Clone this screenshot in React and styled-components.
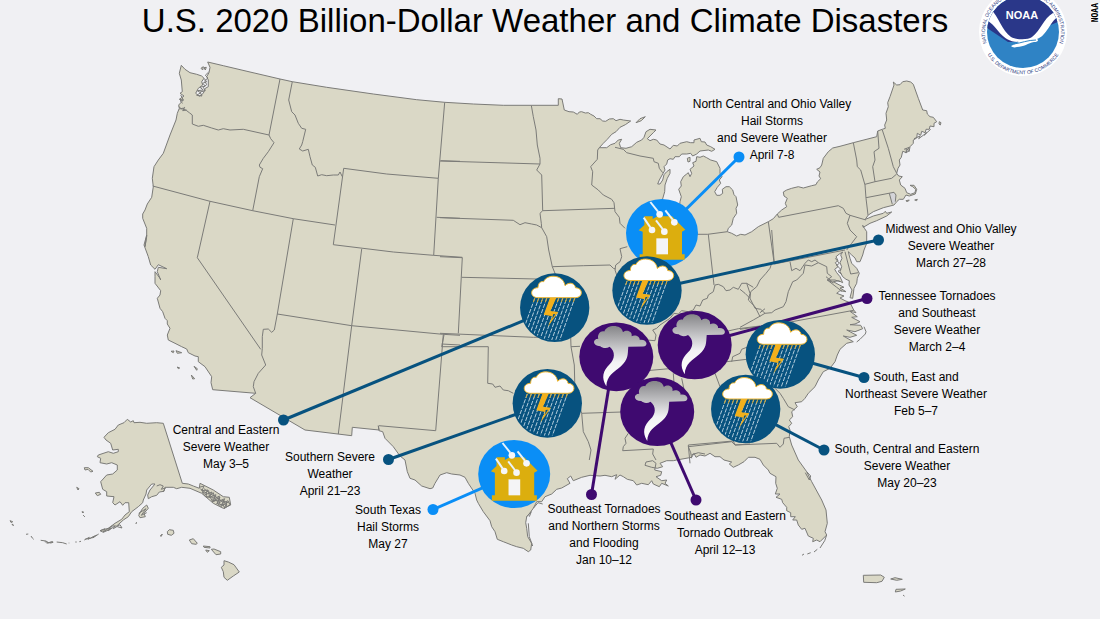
import React from "react";
import styled, { createGlobalStyle } from "styled-components";

const GlobalStyle = createGlobalStyle`
  * { box-sizing: border-box; }
  body { margin: 0; background: #f0f0f3; overflow-x: hidden; }
`;

const C = {
  land: "#dad8c6",
  water: "#f0f0f3",
  border: "#7b7b78",
  hail: "#0a8ef6",
  storm: "#07527f",
  tornado: "#3f0a70",
  gold: "#dcae0e",
};

const Page = styled.main`
  position: relative;
  width: 100%;
  overflow: hidden;
  background: ${C.water};
  color: #000;
  font-family: "Liberation Sans", Arial, sans-serif;
`;

const Header = styled.header`
  display: flex;
  justify-content: center;
  height: 42px;
  padding-right: 10px;
`;

const Title = styled.h1`
  margin: 0;
  font-size: 33px;
  line-height: 42px;
  font-weight: 400;
  white-space: nowrap;
`;

const Seal = styled.svg`
  position: absolute;
  z-index: 1;
  top: -12px;
  right: 32px;
  width: 90px;
  height: 90px;
`;

const Credit = styled.small`
  position: absolute;
  top: 3px;
  right: 0;
  writing-mode: vertical-rl;
  transform: rotate(180deg);
  font: 700 8px/9px "DejaVu Sans Mono", monospace;
  color: #000;
  background: #fff;
`;

const Map = styled.figure`
  position: relative;
  margin: 0;
`;

const MapDrawing = styled.svg`
  display: block;
  width: 100%;
  height: auto;
`;

const Labels = styled.ul`
  list-style: none;
  margin: 0;
  padding: 0;
`;

const Label = styled.li`
  position: absolute;
  left: ${(p) => (p.$x / 1100) * 100}%;
  top: ${(p) => ((p.$y - 42) / 577) * 100}%;
  transform: translateX(-50%);
  font-size: 12px;
  line-height: 17px;
  text-align: center;
  white-space: pre;
`;

/* The chart is surveyed in sheets: a sheet has an origin, and three units to a map unit. */
const SHEETS = {
  A: [140, 50], B: [440, 80], C: [740, 70], D: [140, 230], E: [440, 250],
  F: [740, 230], G: [0, 400], H: [360, 400], I: [620, 420],
};
const plot = (sheet, pts) => {
  const [ox, oy] = SHEETS[sheet];
  return pts.trim().split(/\s+/).map((p) => {
    const [x, y] = p.split(",").map(Number);
    return `${(ox + x / 3).toFixed(1)},${(oy + y / 3).toFixed(1)}`;
  }).join(" ");
};

const COAST = [
  ["A", "124,46 135,58 150,68 170,73 185,78 192,85 185,95 188,105 175,115 167,130 178,139 190,130 196,115 205,110 205,90 200,80 207,68 210,52 203,36 250,47 330,66 420,87 457,95 560,112 700,132 830,149 914,157"],
  ["B", "100,72 190,76 274,76 355,76 355,56 366,57 373,90 387,95 400,96 412,103 418,96 425,95 436,99 445,98 452,103 462,108 470,116 480,116 488,123 497,124 508,117 520,116 528,122 540,118 550,120 572,123 556,134 540,142 528,155 515,163 502,178 490,190 478,203 500,203 512,194 525,190 535,180 545,178 538,190 542,203 558,205 575,200 590,187 605,180 612,172 618,155 630,148 648,150 640,158 622,176 630,182 640,178 650,180 660,192 672,195 690,207 700,196 712,198 720,190 740,185 752,188 762,188 762,180 780,175 784,185 795,186 800,195 812,200 825,208 815,214 805,210 780,213 770,222 758,228 752,220 740,222 725,222 718,230 705,230 700,238 690,236 683,240 680,252 672,260 675,270 668,282 658,300 653,312 660,312 668,300 672,284 680,275 690,268 690,280 682,295 675,315 674,335 667,360 668,420 690,440 715,420 720,365 724,350 716,328 724,318 722,305 730,290 740,282 745,278 750,290 755,280 750,268 762,258 758,248 768,244 770,230 780,232 790,228 800,233 812,240 830,245 840,265 840,280 846,290 838,300 842,310 832,322 824,335 830,346 840,346 848,340 847,328 858,320 868,320 878,330 882,344 888,350 893,375 888,385 890,400 880,415 875,435 865,445 862,455 875,460 890,468 902,463 915,465 935,455 955,440"],
  ["C", "85,455 100,446 112,432 125,420 140,410 136,400 142,385 132,378 130,366 140,360 155,355 175,350 190,354 215,347 228,344 232,336 242,326 237,318 240,306 230,298 240,293 245,285 250,265 265,245 278,234 300,229 340,218 410,200 413,183 427,178 436,175 434,165 440,150 438,130 445,110 443,98 450,80 462,45 460,36 470,45 480,44 488,35 500,33 512,36 520,43 535,85 548,120 560,122 562,132 570,140 580,142 590,155 582,160 582,170 570,168 568,178 558,178 556,188 545,184 542,196 532,190 530,204 520,210 520,220 510,230 508,242 498,236 500,248 488,244 484,262 478,270 480,285 474,295 470,310 476,318 487,320 478,330 482,345 495,355 500,368 512,373 525,368 527,358 518,350 510,346 522,346 530,358 526,372 508,378 498,375 490,388 478,388 470,395 462,405 430,413 400,425 385,435 376,448 384,445 400,438 430,430 436,424 440,430 455,426 440,438 410,452 390,460 370,472 368,466 374,476 380,485 380,520 372,540 368,555"],
  ["F", "360,95 350,95 345,84 335,75 325,65 330,85 335,100 350,115 358,130 352,145 350,160 342,175 338,205 330,203 336,180 327,165 328,152 318,148 308,140 300,125 305,110 300,98 306,85 302,75 308,66 298,72 288,80 294,92 286,98 294,110 284,118 290,128 300,140 308,158 296,152 280,155 300,166 312,172 300,174 318,185 300,182 290,190 312,198 300,204 315,212 330,218 341,240 348,248 330,244 352,260 335,262 360,275 345,282 330,284 362,286 368,296 345,305 320,300 350,316 330,322 310,318 340,335 320,340 300,358 292,375 285,395 270,415 250,425 235,450 225,470 205,490 195,505 185,515 165,518 172,530 155,545 158,560 148,570 155,580 146,590 150,600"],
  ["I", "508,50 515,75 535,120 560,155 575,185 605,240 618,270 622,310 615,335 620,345 600,365 590,360 578,365 580,355 565,348 555,325 545,328 535,315 530,300 518,300 526,290 512,290 512,278 500,272 500,262 488,248 485,238 468,232 480,222 466,222 472,205 467,190 468,170 450,160 445,150 430,135 420,118 405,112 385,112 372,125 355,135 340,142 328,132 335,126 312,120 300,110 285,110 270,100 255,108 240,105 228,112 222,100 215,112 170,120 160,122 140,122 120,130 128,140 112,145 95,142 75,136 78,126 98,122 108,130 104,150 125,155 122,166 108,170 125,182 140,180 135,190 145,198 125,190 118,200 100,192 95,182 85,194 65,190 50,195 40,182 22,178 10,170 0,165"],
  ["H", "765,238 770,224 755,230 735,226 720,228 690,226 665,232 640,242 632,228 622,236 630,250 605,264 590,268 575,282 555,290 545,305 530,305 520,325 505,345 500,350 497,368 500,385 503,410 515,430 512,450 505,455 490,445 470,440 455,435 430,425 412,418 405,395 395,380 390,362 370,335 355,310 350,300 345,280 325,250 315,232 300,225 275,222 260,218 240,225 225,250 218,264 210,266 185,258 165,240 150,235 142,215 135,180 120,168 100,140 75,115 68,95 57,92 55,77"],
  ["D", "717,600 637,592 635,617 495,600 330,503 347,490 218,479 213,458 215,440 195,410 175,395 175,380 165,378 145,368 140,357 125,350 105,340 85,330 82,315 90,295 82,282 82,272 75,265 68,245 60,235 52,205 60,195 62,182 45,160 45,140 45,125 60,145 62,150 52,125 55,112 80,116 55,104 45,118 32,105 25,80 12,45 20,15"],
  ["A", "15,590 20,560 20,535 8,505 8,492 15,480 22,462 35,442 40,410 37,385 42,350 55,330 70,310 90,255 108,210 112,190 118,175 116,165 130,150 118,148 132,138 120,130 127,125 124,90 118,70"],
];

const ALASKA = ["G", "382,58 392,66 400,62 402,68 420,67 440,70 470,68 490,70 547,250 565,252 580,258 598,265 600,250 640,270 670,290 688,292 692,315 670,325 640,310 605,280 570,265 545,262 530,266 520,262 495,262 492,274 478,276 470,286 455,290 445,296 443,285 450,270 465,252 455,252 440,270 438,282 430,300 428,308 415,320 395,335 385,350 370,360 350,378 335,378 330,388 310,397 300,392 325,385 345,370 365,358 375,345 388,335 386,308 375,308 368,316 360,305 345,315 338,308 342,290 320,288 320,275 308,268 302,245 320,225 338,222 352,210 352,195 335,188 320,192 300,188 302,175 292,170 295,165 325,155 340,160 355,155 355,148 338,150 332,130 318,120 312,112 325,98 345,88 355,75 372,68"];

const ISLANDS = [
  ["G", "502,395 508,389 520,391 522,400 514,406 503,403"], ["G", "481,408 487,402 484,409"],
  ["G", "568,420 580,416 592,430 588,433 575,431"], ["G", "610,438 630,440 630,444 612,442"],
  ["G", "634,448 642,447 662,455 662,462 648,464"], ["G", "617,450 628,452 622,457"],
  ["G", "672,482 685,486 702,494 718,516 700,528 682,541 672,532 670,515 664,502 672,495"],
  ["I", "730,466 782,465 793,472 786,484 770,488 731,487"], ["I", "812,477 825,473 847,478 830,481"],
  ["I", "828,508 856,507 842,513 826,516"],
  ["G", "286,279 298,277 302,283 292,287"], ["G", "253,203 265,203 279,214 272,216 264,208 255,210"],
  ["G", "420,338 428,325 440,315 445,325 432,340 436,350 420,353 416,346"],
  ["B", "588,128 600,116 616,110 604,122"], ["B", "742,235 750,232 750,244 744,246"],
  ["C", "598,155 603,158 601,165 597,162"], ["C", "498,392 508,390 502,396"], ["C", "524,390 532,388 530,392"],
  ["D", "93,364 102,363 100,368"], ["D", "108,362 125,368 112,370"], ["D", "112,411 119,414 115,416"],
  ["D", "162,409 172,416 170,421"], ["D", "154,435 164,446 158,447"], ["A", "183,55 190,50 188,60"], ["A", "192,53 199,52 196,60"],
  ["G", "30,362 38,365 34,368"], ["G", "36,372 41,376 38,376"], ["G", "230,262 237,266 234,270"], ["G", "246,335 251,336 248,339"], ["G", "250,346 254,350"], ["G", "407,370 411,368"],
  ["I", "850,526 853,528"],
];

const BORDERS = [
  ["A", "420,87 387,255"],
  ["A", "118,177 128,175 140,182 148,188 157,195 157,222 175,229 190,226 215,234 235,240 250,236 270,240 310,238 387,255"],
  ["A", "387,255 392,266 402,278 385,305 370,325 358,345 360,352 368,356 358,380 338,482"],
  ["A", "38,408 210,454 338,482 460,506 585,525"],
  ["A", "210,454 172,623"],
  ["A", "457,95 446,150 455,185 465,195 475,220 485,235 497,238 488,275 485,285 478,297 488,303 505,298 510,320 517,345 526,352 533,378 545,374 560,377 580,375 595,375 600,366 607,380"],
  ["A", "611,355 580,584"], ["A", "611,355 740,372 895,385"], ["A", "914,157 895,385 881,616"],
  ["A", "902,332 960,334"], ["A", "890,502 960,505"], ["A", "460,506 412,792"],
  ["D", "172,83 362,358"], ["D", "580,44 760,66 880,76 967,82"], ["D", "665,57 635,287 595,612"],
  ["D", "412,252 403,300 395,307 385,297 370,298 367,320 367,355 365,375 377,405 355,430 342,455 340,470 347,490"],
  ["D", "412,252 635,287 908,313 960,316"], ["D", "910,313 887,602 717,587"], ["D", "905,342 960,345"],
  ["B", "0,243 300,252"], ["B", "0,413 220,421 240,434 255,428 275,432 290,435 305,443"],
  ["B", "274,76 280,110 288,150 292,195 300,235 300,252 290,270 305,285 308,392 300,400 304,430 305,443 320,470 326,510 337,560 345,580 355,590"],
  ["B", "308,392 525,385"],
  ["B", "478,203 473,210 472,238 452,260 458,275 455,315 475,330 490,345 515,358 522,368 525,395 538,412 540,430 555,445"],
  ["B", "562,500 540,506 545,530 540,545 527,555 525,570 530,585 528,620"],
  ["B", "337,560 430,557 510,555 520,565 527,567"],
  ["B", "0,530 67,533 55,760"], ["B", "65,592 290,597"], ["B", "525,202 550,208 560,218 600,228 640,235 642,245 655,250 658,265 668,278"],
  ["B", "770,463 803,463 862,455"], ["B", "805,463 822,615"],
  ["C", "85,455 103,582"], ["C", "112,432 116,442 295,407 310,415 318,430 330,436 378,450"],
  ["C", "340,218 350,270 352,290 362,300 375,345 378,385 384,435"],
  ["C", "413,183 417,235 402,245 405,270 398,290 405,335"], ["C", "427,180 445,235 460,290 470,310"],
  ["C", "375,343 405,335 455,325 470,312"], ["C", "378,383 462,367 468,375 466,395"], ["C", "448,370 457,403"],
  ["C", "330,436 322,460 330,480 350,500 335,520 320,540"],
  ["F", "95,0 103,102 315,60"], ["F", "315,65 332,132 355,128"],
  ["F", "150,95 155,122 168,115 180,122 195,100 205,90 215,95 225,90 235,98 260,110 262,130 275,140 262,150 285,150 300,155"],
  ["F", "235,98 215,108 195,105 190,130 170,150 158,155 145,185 138,215 130,230 105,240 95,248 75,250 62,238 45,235 30,205 32,185 50,170 60,150 78,130 90,115 95,100"],
  ["F", "30,205 15,190 0,178"], ["F", "75,250 40,270 0,292"], ["F", "0,298 130,280 341,241"],
  ["F", "105,475 120,490 130,505 145,530 165,540"],
  ["F", "60,248 75,236"],
  ["E", "0,250 280,262 392,262 393,290 403,345 405,430 425,490 430,545 445,575 453,600 448,630"],
  ["E", "12,255 5,290 145,290 143,400 158,402 165,412 180,408 190,420 205,422 220,430"],
  ["E", "393,290 420,289"], ["E", "425,490 545,486"], ["E", "565,550 555,565 558,580 550,590 548,602 640,597 638,612 648,630"],
  ["E", "620,270 645,272 648,255 638,240 650,235 660,225 690,205 702,190 715,192 725,182 745,185 760,180 768,165 780,168 788,150 802,145 805,135 820,125 825,105 835,103 850,110 858,122 870,120 880,112 895,118 905,100 920,100 940,112"],
  ["E", "620,362 700,355 740,348 860,335 920,328"], ["E", "700,370 702,400"], ["E", "825,370 840,410"],
  ["E", "750,640 745,585 880,573 885,585 930,582"], ["E", "875,335 878,320 900,310 905,298 925,290"],
  ["E", "920,100 930,130 925,150 945,170 960,200"], ["E", "855,245 895,236 960,228"], ["E", "725,385 745,480"],
  ["I", "345,75 470,70 480,82 490,72 492,55 508,52"],
  ["I", "215,115 212,98 205,80 335,65 345,75"],
];

/* Sounds, inlets and island chains too fine to fill. */
const INLETS = [
  ["A", "192,85 200,95 188,100 196,108 180,112 190,120 172,122 182,128 170,136 186,138 180,126 196,122 190,112 200,104 194,92 204,84 196,76 206,66"],
  ["A", "116,170 126,178 134,172 128,182 140,180"], ["A", "122,135 130,150 120,152 128,160"],
  ["G", "598,262 612,258 606,272 624,270 616,284 636,276 628,292 648,284 640,302 660,292 650,312 672,300 662,320 682,306 672,326 690,314 684,302 668,310 674,296 656,304 658,288 644,296 640,278 628,288 626,272 612,280 602,266"],
  ["G", "606,276 618,292 630,290 638,306 650,300 656,316 668,312 674,324"],
  ["G", "602,268 620,280 618,290 640,292 638,302 656,300 660,314 680,312 678,322"],
  ["G", "612,266 632,282 650,292 664,302 686,308"],
  ["G", "300,392 315,386 310,396 330,382 325,392 345,378 340,386 360,374 366,384 352,380"],
  ["G", "253,420 268,412 264,418 284,408 278,414 296,402"], ["G", "122,421 138,423 145,428 158,425 140,430"],
  ["G", "134,425 152,429 160,427"], ["G", "256,417 272,415 290,405"],
  ["G", "170,426 188,428 200,432"], ["G", "78,403 85,402"], ["G", "93,408 97,414 101,418"], ["G", "226,426 230,426"], ["G", "238,425 243,424"], ["G", "206,429 208,429"],
  ["G", "470,258 480,254 490,258 484,268 496,264 490,275"], ["G", "416,340 438,326 424,346 440,338"],
  ["H", "500,350 514,335 508,350"], ["H", "520,325 534,308 548,312"], ["H", "505,370 508,410 518,438"],
  ["I", "546,406 552,402"], ["I", "562,402 572,398"], ["I", "582,396 592,388"], ["I", "600,384 614,362 620,345"], ["I", "560,155 572,168 568,180 556,158"],
  ["C", "492,238 508,232 496,248 510,242"], ["C", "522,206 540,198 536,206 560,188 552,196 572,178"],
  ["F", "286,85 298,100 290,106 302,118 294,124 306,134"], ["F", "258,140 280,158 262,150 290,172 306,184"],
  ["F", "372,290 378,305 376,312 360,328 350,336"],
  ["I", "215,104 235,98 255,102"],
];

const EVENTS = [
  { kind: "hail", at: [662, 233], dot: [739, 157], x: 772, y: 96, text: "North Central and Ohio Valley\nHail Storms\nand Severe Weather\nApril 7-8" },
  { kind: "storm", at: [647, 290.5], dot: [878.5, 240], x: 951, y: 221, text: "Midwest and Ohio Valley\nSevere Weather\nMarch 27–28" },
  { kind: "tornado", at: [694.7, 345], dot: [867, 298.5], x: 937, y: 288, text: "Tennessee Tornadoes\nand Southeast\nSevere Weather\nMarch 2–4" },
  { kind: "storm", at: [780.3, 354.3], dot: [864, 377.5], x: 916, y: 369, text: "South, East and\nNortheast Severe Weather\nFeb 5–7" },
  { kind: "storm", at: [745.7, 409], dot: [824, 450], x: 907, y: 441, text: "South, Central and Eastern\nSevere Weather\nMay 20–23" },
  { kind: "storm", at: [554.7, 307.7], dot: [283.5, 420], x: 226, y: 422, text: "Central and Eastern\nSevere Weather\nMay 3–5" },
  { kind: "storm", at: [547.3, 403.3], dot: [388.5, 459.5], x: 330, y: 449, text: "Southern Severe\nWeather\nApril 21–23" },
  { kind: "hail", at: [514.2, 474], dot: [433, 509.5], x: 388, y: 502, text: "South Texas\nHail Storms\nMay 27" },
  { kind: "tornado", at: [616.3, 356.8], dot: [591.5, 494.5], edge: [610, 380], x: 604, y: 501, text: "Southeast Tornadoes\nand Northern Storms\nand Flooding\nJan 10–12" },
  { kind: "tornado", at: [657.2, 411.7], dot: [696, 500], x: 725, y: 508, text: "Southeast and Eastern\nTornado Outbreak\nApril 12–13" },
];

const RAIN = Array.from({ length: 11 }, (_, i) => -60 + i * 12);

function StormIcon() {
  return (
    <>
      <ellipse rx="104" ry="103" fill={C.storm} />
      <g clipPath="url(#disc)" stroke="#b4cddc" strokeWidth="3" strokeDasharray="13 4">
        {RAIN.map((x, i) => <path key={x} d={`M${x} -28L${x - 46} 100`} strokeDashoffset={(i % 3) * 6} />)}
      </g>
      <g stroke="#d9a72c" strokeWidth="3">
        {RAIN.map((x) => <path key={x} d={`M${x} -28l-4 11`} />)}
      </g>
      <path d="M-14 -30H5L-13 10L11 13L-21 58L-7 26L-33 21Z" fill="#f2b01c" />
      <path d="M-5 20L2 19L-7 34Z" fill={C.storm} />
      <path d="M-50 -30C-76 -30 -75 -60 -50 -60C-50 -74 -42 -80 -33 -78C-24 -102 26 -101 31 -66C44 -80 62 -72 62 -60C86 -60 86 -30 62 -30Z" fill="#fff" stroke="#efb52c" strokeWidth="3" />
    </>
  );
}

function TornadoIcon() {
  return (
    <>
      <ellipse rx="111" ry="103" fill={C.tornado} />
      <path d="M-48 -32C-72 -32 -72 -54 -54 -54C-58 -68 -46 -80 -36 -76C-28 -98 16 -98 20 -74C32 -84 49 -76 46 -62C56 -68 72 -61 70 -51C94 -54 97 -31 80 -31L36 -30C34 -4 36 8 14 28C-8 46 -28 56 -30 88C-46 62 -40 42 -20 22C-4 8 -2 -16 -20 -30C-30 -24 -42 -26 -48 -32Z" fill="url(#funnel)" />
    </>
  );
}

const STONES = [[-7, -56, -35, -93], [37, -32, 10, -68], [-30, -9, -55, -46], [7, -4, -18, -38]];

function HailIcon() {
  return (
    <>
      <ellipse rx="108" ry="102" fill={C.hail} />
      <path d="M-70 -8L-53 -24V-50H-28V-42L-14 -50H30L70 -10L60 -4V64H68V80H-67V64H-58V-4Z" fill={C.gold} />
      <path d="M-17 16H18V64H-17Z" fill="#f4f4f6" />
      {STONES.map(([x, y, a, b]) => (
        <g key={x}>
          <path d={`M${a} ${b}L${x - 5} ${y - 8}`} stroke="#e9f3fa" strokeWidth="6" />
          <circle cx={x} cy={y} r="10" fill="#f6f6f8" />
        </g>
      ))}
    </>
  );
}

const ICONS = { hail: HailIcon, storm: StormIcon, tornado: TornadoIcon };

function NoaaSeal() {
  return (
    <Seal viewBox="0 0 90 90" role="img" aria-label="NOAA seal">
      <defs>
        <clipPath id="seal"><circle cx="45" cy="44" r="36" /></clipPath>
        <path id="ringTop" d="M13.1 64.7A38 38 0 1 1 76.9 64.7" />
        <path id="ringLow" d="M3.4 50A42 42 0 0 0 86.6 50" />
      </defs>
      <circle cx="45" cy="44" r="44" fill="#fff" />
      <g clipPath="url(#seal)">
        <path d="M0 0H90V90H0Z" fill="#2f83c5" />
        <path d="M0 0H90V30L70 38L52 54H30L0 34Z" fill="#2a3789" />
        <path d="M0 14L13 22C20 27 24 43 33 49C39 52 50 52 54 49C63 42 65 31 75 25L90 18V28L80 29C72 33 69 48 59 51C61 52 60 54 56 54C50 55 46 59 39 59C36 60 34 59 33 58L41 54C22 54 21 38 8 32L0 30Z" fill="#fff" />
        <path d="M36 56C43 55 50 52 58 52" stroke="#2f83c5" strokeWidth="1" fill="none" />
      </g>
      <text x="44" y="31" textAnchor="middle" fill="#fff" fontSize="11" fontWeight="700" fontFamily="Liberation Sans, sans-serif">NOAA</text>
      <g fill="#2b3a80" fontSize="5" fontFamily="Liberation Sans, sans-serif">
        <text textAnchor="middle"><textPath href="#ringTop" startOffset="50%">NATIONAL OCEANIC AND ATMOSPHERIC ADMINISTRATION</textPath></text>
        <text textAnchor="middle"><textPath href="#ringLow" startOffset="50%">U.S. DEPARTMENT OF COMMERCE</textPath></text>
      </g>
    </Seal>
  );
}

function DisasterMap() {
  return (
    <MapDrawing viewBox="0 42 1100 577" role="img" aria-label="Map of the United States with ten weather disasters">
      <defs>
        <clipPath id="disc"><ellipse rx="100" ry="98" /></clipPath>
        <linearGradient id="funnel" x1="0" y1="0" x2="0" y2="1">
          <stop offset="0" stopColor="#858588" />
          <stop offset="0.6" stopColor="#f2f2f4" />
          <stop offset="1" stopColor="#fff" />
        </linearGradient>
      </defs>
      <g fill={C.land} stroke={C.border} strokeWidth="1" strokeLinejoin="round">
        <polygon points={COAST.map(([s, p]) => plot(s, p)).join(" ")} />
        <polygon points={plot(...ALASKA)} />
        {ISLANDS.map(([s, p]) => <polygon key={s + p} points={plot(s, p)} />)}
      </g>
      <polygon points={plot("C", "449,370 462,368 467,376 466,398 457,402")} fill="#d4d4d8" />
      <g fill="none" stroke={C.border} strokeWidth="1" strokeLinejoin="round">
        {[...BORDERS, ...INLETS].map(([s, p]) => <polyline key={s + p} points={plot(s, p)} />)}
      </g>
      {EVENTS.map((e) => (
        <g key={e.text} stroke={C[e.kind]} fill={C[e.kind]}>
          <path d={`M${e.dot}L${e.edge || e.at}`} strokeWidth="3" />
          <circle cx={e.dot[0]} cy={e.dot[1]} r="5.5" stroke="none" />
        </g>
      ))}
      {EVENTS.map((e) => {
        const Icon = ICONS[e.kind];
        return <g key={e.text} transform={`translate(${e.at}) scale(0.3333)`}><Icon /></g>;
      })}
    </MapDrawing>
  );
}

export default function App() {
  return (
    <>
      <GlobalStyle />
      <Page>
        <Header><Title>U.S. 2020 Billion-Dollar Weather and Climate Disasters</Title></Header>
        <NoaaSeal />
        <Credit>NOAA</Credit>
        <Map>
          <DisasterMap />
          <Labels>
            {EVENTS.map((e) => <Label key={e.text} $x={e.x} $y={e.y}>{e.text}</Label>)}
          </Labels>
        </Map>
      </Page>
    </>
  );
}
